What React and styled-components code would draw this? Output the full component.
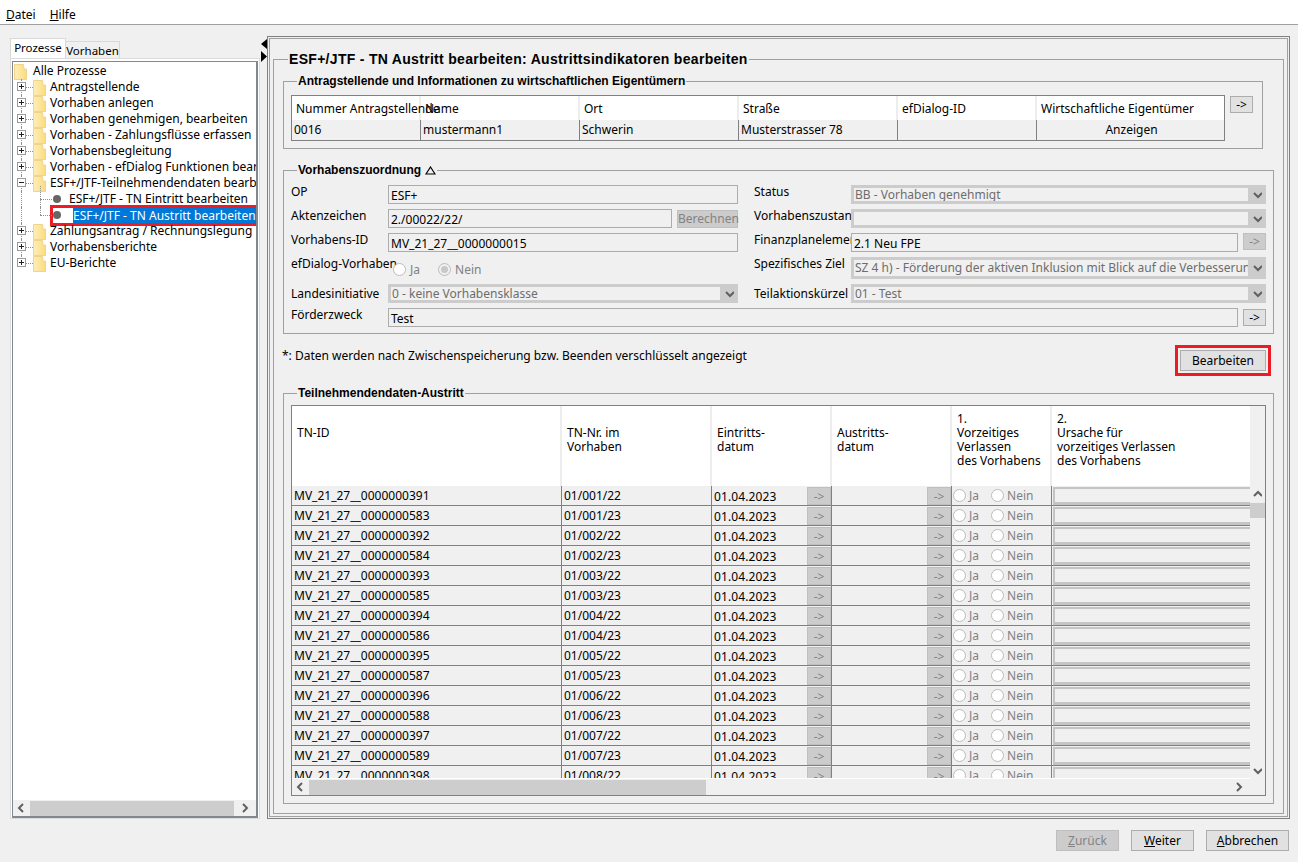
import React from 'react';
import styled, { createGlobalStyle } from 'styled-components';

const Global = createGlobalStyle`
  html, body { margin: 0; padding: 0; background: #f0f0f0; }
  body { font-family: "Noto Sans", "Liberation Sans", sans-serif; font-size: 12px; color: #000; }
  * { box-sizing: border-box; }
`;

const Page = styled.div`
  width: 1298px; height: 862px; display: flex; flex-direction: column; overflow: hidden; background: #f0f0f0;
`;
const MenuBar = styled.div`
  height: 25px; background: #fff; border-bottom: 1px solid #a0a0a0; display: flex; gap: 14px; padding: 6px 0 0 6px; line-height: 17px;
`;
const MenuItem = styled.span`
  font-size: 12px;
  u { text-underline-offset: 1px; }
`;
const Body = styled.div`
  display: flex; height: 794px; padding: 11px 0 0 10px;
`;
const LeftPane = styled.div`
  width: 250px; height: 783px; display: flex; flex-direction: column;
`;
const Tabs = styled.div`
  display: flex; align-items: flex-end; height: 22px; 
`;
const Tab = styled.div`
  height: ${p => p.$active ? 20 : 17}px;
  width: ${p => p.$active ? 56 : 54}px;
  background: ${p => p.$active ? '#fff' : '#f0f0f0'};
  border: 1px solid #d9d9d9;
  border-bottom: none;
  ${p => !p.$active && 'border-left: none;'}
  text-align: center; font-size: 11.5px; line-height: ${p => p.$active ? 17 : 17}px;
`;
const TabPanel = styled.div`
  height: 761px; background: #fff; border: 1px solid #dcdcdc; padding: 2px 1px 1px 1px;
`;
const TreeBox = styled.div`
  height: 757px; border: 2px solid #828790; border-width: 1px 2px 2px 1px; background: #fff; display: flex; flex-direction: column;
`;
const TreeList = styled.div`
  flex: 1; overflow: hidden; padding-top: 1px;
`;
const Row = styled.div`
  position: relative; height: 16px; display: flex; align-items: center; white-space: nowrap; padding-left: ${p => p.$pad}px; line-height: 16px;
`;
const RowLabel = styled.span`
  margin-left: ${p => p.$gap}px;
`;
const VLine = styled.i`
  position: absolute; left: ${p => p.$x}px; top: ${p => p.$top}px; height: ${p => p.$h}px; width: 0; border-left: 1px dotted #909090;
`;
const HLine = styled.i`
  position: absolute; left: ${p => p.$x}px; top: 8px; width: ${p => p.$w}px; height: 0; border-top: 1px dotted #909090;
`;
const Expander = styled.span`
  position: absolute; left: 4px; top: 3px; width: 9px; height: 9px; background: #fff; border: 1px solid #9a9a9a; display: flex; align-items: center; justify-content: center; z-index: 1;
`;
const Selected = styled.span`
  display: inline-flex; align-items: center; height: 15px; outline: 3px solid #ed1c24; padding-right: 0;
`;
const SelectedText = styled.span`
  background: #0078d7; color: #fff; height: 15px; line-height: 15px; margin-left: 12px; padding-right: 2px;
`;
const Bullet = styled.span`
  width: 8px; height: 8px; border-radius: 50%; background: #666; display: inline-block; flex: none;
`;

const HScroll = styled.div`
  height: 16px; background: #f0f0f0; display: flex; align-items: center; flex: none; padding: ${p => p.$pad};
`;
const ArrowBtn = styled.span`
  width: ${p => p.$w || 16}px; height: 15px; display: flex; align-items: center; justify-content: center; flex: none;
`;
const Thumb = styled.span`
  display: block; background: #cdcdcd; height: 15px; width: ${p => p.$w}px; flex: none;
`;
const Track = styled.span`
  flex: 1;
`;

const Splitter = styled.div`
  width: 8px; margin-left: -1px; padding: 3px 0 0 2px; display: flex; flex-direction: column; gap: 2px; flex: none; align-items: flex-start;
`;
const OuterPanel = styled.div`
  width: 1023px; height: 783px; border: 1px solid #808080; padding: 1px; 
`;
const InnerPanel = styled.div`
  height: 100%; border: 1px solid #a0a0a0; padding: 12px 3px 0 3px;
`;
const Fieldset = styled.fieldset`
  margin: ${p => p.$m || 0}; padding: ${p => p.$p}; border: 1px solid ${p => p.$c || '#a0a0a0'}; min-width: 0; ${p => p.$h && `height: ${p.$h}px;`}
`;
const Legend = styled.legend`
  padding: 0 1px; margin-left: ${p => p.$ml || 6}px; font-family: "Liberation Sans", Arial, sans-serif; font-weight: 700; line-height: ${p => p.$lh || 14}px; font-size: ${p => p.$fs || 12}px; letter-spacing: ${p => p.$ls || 0}px; display: flex; align-items: center; gap: 4px;
`;

const Table = styled.div`
  border: 1px solid #808080; background: #f0f0f0;
`;
const HeadRow = styled.div`
  display: grid; grid-template-columns: ${p => p.$cols}; background: #fff; height: ${p => p.$h}px;
`;
const BodyRow = styled.div`
  display: grid; grid-template-columns: ${p => p.$cols}; height: ${p => p.$h}px; border-bottom: ${p => p.$line ? '1px solid #808080' : 'none'};
`;
const HeadCell = styled.div`
  padding: ${p => p.$p || '0 0 0 5px'}; border-right: 2px solid #ededed; line-height: 14px; white-space: nowrap;
  &:last-child { border-right: none; }
`;
const Cell = styled.div`
  border-right: 1px solid #808080; white-space: nowrap; overflow: hidden; padding-left: 2px; line-height: 19px; color: #000; text-align: ${p => p.$center ? 'center' : 'left'};
`;

const SmallBtn = styled.button`
  width: 23px; height: 17px; padding: 0; border: 1px solid #adadad; background: #e1e1e1; font: inherit; font-size: 12px; line-height: 13px; color: #000; flex: none;
  ${p => p.$off && 'background: #cccccc; border-color: #bfbfbf; color: #838383;'}
`;
const Section1Row = styled.div`
  display: flex; gap: 5px; align-items: flex-start;
`;
const Grid = styled.div`
  display: grid; grid-template-columns: 97px 350px 16px 97px 415px; grid-template-rows: 24px 24px 24px 27px 24px 19px; 
`;
const Label = styled.div`
  padding-top: ${p => p.$t ?? 0}px; line-height: 14px; white-space: nowrap; 
`;
const Spacer = styled.div``;
const Ctl = styled.div`
  display: flex; gap: 5px; align-items: flex-start; min-width: 0; ${p => p.$span && `grid-column: span ${p.$span};`}
`;
const Input = styled.div`
  flex: 1; height: 19px; border: 1px solid #acacac; background: #f0f0f0; padding: 3px 1px 0 2px; line-height: 14px; white-space: nowrap; overflow: hidden;
`;
const CalcBtn = styled.button`
  width: 61px; height: 18px; margin-top: 1px; padding: 0; border: 1px solid #bfbfbf; background: #cccccc; color: #838383; font: inherit; font-size: 12px; line-height: 14px; flex: none;
`;
const Select = styled.div`
  flex: 1; height: ${p => p.$h || 19}px; border: 3px solid #cccccc; border-right: none; background: #f0f0f0; display: flex; min-width: 0;
`;
const SelectText = styled.div`
  flex: 1; padding-left: 1px; color: #6d6d6d; line-height: ${p => (p.$h || 19) - 6}px; white-space: nowrap; overflow: hidden;
`;
const SelectArrow = styled.div`
  width: 18px; background: #cccccc; display: flex; align-items: center; justify-content: center; flex: none;
`;
const RadioGroup = styled.div`
  display: flex; align-items: center; gap: 4px; height: 24px; padding: 0 0 0 5px; color: #808080; margin-top: 0;
`;
const Radio = styled.span`
  width: 13px; height: 13px; border-radius: 50%; border: 1px solid #bcbcbc; background: #fff; flex: none; display: flex; align-items: center; justify-content: center; margin-left: ${p => p.$ml || 0}px;
  ${p => p.$on && `background: #f0f0f0; &::after { content: ''; width: 7px; height: 7px; border-radius: 50%; background: #c8c8c8; }`}
`;
const NoteRow = styled.div`
  display: flex; justify-content: space-between; align-items: flex-start; height: 52px; padding: 13px 6px 0 0; margin-left: -1px; margin-right: 2px;
`;
const Note = styled.div`
  line-height: 16px; padding-top: 1px;
`;
const EditBtn = styled.button`
  width: 86px; height: 21px; margin-top: 3px; padding: 0; border: 1px solid #adadad; background: #e1e1e1; font: inherit; font-size: 12px; outline: 3px solid #ed1c24; outline-offset: 2px;
`;
const DataTable = styled.div`
  border: 1px solid #808080; height: 391px; display: flex; flex-direction: column; background: #f0f0f0;
`;
const TableMain = styled.div`
  flex: 1; display: flex; min-height: 0;
`;
const TableScroll = styled.div`
  width: 958px; flex: none; overflow: hidden; background: #fff; border-bottom: 1px solid #fff; height: 373px;
`;
const VScroll = styled.div`
  flex: 1; display: flex; flex-direction: column; padding-top: 80px;
`;
const VThumb = styled.span`
  display: block; height: 15px; background: #cdcdcd;
`;
const VArrow = styled.span`
  height: 17px; display: flex; align-items: center; justify-content: center;
`;
const VTrack = styled.span`
  flex: 1;
`;
const DataRows = styled.div`
  background: #f0f0f0;
`;
const DateCell = styled(Cell)`
  display: flex; justify-content: space-between; padding-top: 0; line-height: 21px; letter-spacing: 0.1px;
`;
const CellBtn = styled(SmallBtn)`
  margin-top: 1px; height: 18px; font-size: 12px; width: 24px;
`;
const RadioCell = styled(Cell)`
  display: flex; align-items: center; gap: 3px; color: #808080; padding-left: 1px; height: 19px;
`;
const FakeField = styled.div`
  margin: 1px 0 0 1px; height: 18px; border: solid #c4c4c4; border-width: 2px 0 3px 2px; background: #f0f0f0;
`;
const LastCell = styled.div`
  overflow: hidden;
`;

const Footer = styled.div`
  display: flex; justify-content: flex-end; gap: 12px; padding: 11px 9px 0 0;
`;
const FootBtn = styled.button`
  height: 21px; width: ${p => p.$w}px; padding: 0; border: 1px solid #adadad; background: #e1e1e1; font: inherit; font-size: 12px; color: #000;
  ${p => p.$off && 'background: #cccccc; border-color: #bfbfbf; color: #838383;'}
`;
const Tri = styled.svg`
  display: block; flex: none;
`;

const Chevron = ({ dir }) => {
  const pts = { left: '6,1 2,5 6,9', right: '2,1 6,5 2,9', up: '1,6 5,2 9,6', down: '1,3 5,7 9,3' }[dir];
  return <svg width="9" height="10" viewBox="0 0 9 10" style={{ display: 'block' }}><polyline points={pts} fill="none" stroke="#606060" strokeWidth="2" /></svg>;
};

const Folder = ({ ml }) => (
  <svg width="13" height="17" viewBox="0 0 13 17" style={{ display: 'block', flex: 'none', marginLeft: ml }}>
    <defs>
      <linearGradient id="fg" x1="0" x2="1" y1="0" y2="0">
        <stop offset="0" stopColor="#ffeeb8" />
        <stop offset="1" stopColor="#fbdb7e" />
      </linearGradient>
    </defs>
    <path d="M0.5 1.5 L9.5 1.5 L10 6 L12.5 6 L12.5 16.5 L0.5 16.5 Z" fill="url(#fg)" stroke="#efd58c" strokeWidth="1" />
  </svg>
);

const Plus = ({ minus }) => (
  <svg width="7" height="7" viewBox="0 0 7 7" style={{ display: 'block' }}>
    <rect x="1" y="3" width="5" height="1" fill="#222" />
    {!minus && <rect x="3" y="1" width="1" height="5" fill="#222" />}
  </svg>
);

const treeTop = ['Antragstellende', 'Vorhaben anlegen', 'Vorhaben genehmigen, bearbeiten', 'Vorhaben - Zahlungsflüsse erfassen', 'Vorhabensbegleitung', 'Vorhaben - efDialog Funktionen bearbeiten'];
const treeBottom = ['Zahlungsantrag / Rechnungslegung', 'Vorhabensberichte', 'EU-Berichte'];

const TreeFolder = ({ text, minus, last }) => (
  <Row $pad={20}>
    <VLine $x={8} $top={0} $h={last ? 8 : 16} />
    <HLine $x={13} $w={7} />
    <Expander><Plus minus={minus} /></Expander>
    <Folder />
    <RowLabel $gap={4}>{text}</RowLabel>
  </Row>
);

const Cols1 = '129px 159px 159px 159px 139px 188px';
const names = [391, 583, 392, 584, 393, 585, 394, 586, 395, 587, 396, 588, 397, 589, 398];
const rows = names.map((n, i) => ({
  id: `MV_21_27__0000000${n}`,
  nr: `01/${String(Math.floor(i / 2) + 1).padStart(3, '0')}/${i % 2 ? 23 : 22}`,
}));
const Cols2 = '270px 150px 120px 120px 100px 198px';

const heads = [
  ['\u00a0', 'TN-ID'],
  ['\u00a0', 'TN-Nr. im', 'Vorhaben'],
  ['\u00a0', 'Eintritts-', 'datum'],
  ['\u00a0', 'Austritts-', 'datum'],
  ['1.', 'Vorzeitiges', 'Verlassen', 'des Vorhabens'],
  ['2.', 'Ursache für', 'vorzeitiges Verlassen', 'des Vorhabens'],
];

export default function App() {
  return (
    <Page>
      <Global />
      <MenuBar>
        <MenuItem><u>D</u>atei</MenuItem>
        <MenuItem><u>H</u>ilfe</MenuItem>
      </MenuBar>
      <Body>
        <LeftPane>
          <Tabs>
            <Tab $active>Prozesse</Tab>
            <Tab>Vorhaben</Tab>
          </Tabs>
          <TabPanel>
            <TreeBox>
              <TreeList>
                <Row $pad={1}>
                  <Folder />
                  <RowLabel $gap={6}>Alle Prozesse</RowLabel>
                </Row>
                {treeTop.map(t => <TreeFolder key={t} text={t} />)}
                <TreeFolder text="ESF+/JTF-Teilnehmendendaten bearbeiten" minus />
                <Row $pad={40}>
                  <VLine $x={8} $top={0} $h={16} />
                  <VLine $x={27} $top={-5} $h={21} />
                  <HLine $x={27} $w={12} />
                  <Bullet />
                  <RowLabel $gap={8}>ESF+/JTF - TN Eintritt bearbeiten</RowLabel>
                </Row>
                <Row $pad={40}>
                  <VLine $x={8} $top={0} $h={16} />
                  <VLine $x={27} $top={0} $h={8} />
                  <HLine $x={27} $w={12} />
                  <Selected>
                    <Bullet />
                    <SelectedText>ESF+/JTF - TN Austritt bearbeiten</SelectedText>
                  </Selected>
                </Row>
                {treeBottom.map((t, i) => <TreeFolder key={t} text={t} last={i === 2} />)}
              </TreeList>
              <HScroll $pad="0 0 0 0">
                <ArrowBtn $w={17}><Chevron dir="left" /></ArrowBtn>
                <Thumb $w={204} />
                <Track />
                <ArrowBtn $w={22}><Chevron dir="right" /></ArrowBtn>
              </HScroll>
            </TreeBox>
          </TabPanel>
        </LeftPane>
        <Splitter>
          <Tri width="7" height="10" viewBox="0 0 7 10"><path d="M6 0 L0 5 L6 10 Z" fill="#000" /></Tri>
          <Tri width="7" height="11" viewBox="0 0 7 11"><path d="M0 0 L6 5.5 L0 11 Z" fill="#000" /></Tri>
        </Splitter>
        <OuterPanel>
          <InnerPanel>
            <Fieldset $p="7px 9px 0 9px" $h={763} $c="#a0a0a0">
              <Legend $fs={14} $lh={16} $ml={5} $ls={0.3}>ESF+/JTF - TN Austritt bearbeiten: Austrittsindikatoren bearbeiten</Legend>
              <Fieldset $p="7px 7px 7px 7px" $m="0 11px 0 0">
                <Legend>Antragstellende und Informationen zu wirtschaftlichen Eigentümern</Legend>
                <Section1Row>
                  <Table style={{ width: 934 }}>
                    <HeadRow $cols={Cols1} $h={24}>
                      {['Nummer Antragstellende', 'Name', 'Ort', 'Straße', 'efDialog-ID', 'Wirtschaftliche Eigentümer'].map(h => (
                        <HeadCell key={h} $p="6px 0 0 4px">{h}</HeadCell>
                      ))}
                    </HeadRow>
                    <BodyRow $cols={Cols1} $h={20}>
                      <Cell>0016</Cell>
                      <Cell>mustermann1</Cell>
                      <Cell>Schwerin</Cell>
                      <Cell>Musterstrasser 78</Cell>
                      <Cell />
                      <Cell $center>Anzeigen</Cell>
                    </BodyRow>
                  </Table>
                  <SmallBtn style={{ marginTop: 1 }}>-&gt;</SmallBtn>
                </Section1Row>
              </Fieldset>
              <Fieldset $p="8px 7px 6px 7px" $m="14px 0 0 0">
                <Legend>
                  Vorhabenszuordnung
                  <svg width="11" height="9" viewBox="0 0 11 9" style={{ display: 'block' }}><path d="M5.5 1 L10 8 L1 8 Z" fill="none" stroke="#000" strokeWidth="1.2" /></svg>
                </Legend>
                <Grid>
                  <Label $t={0}>OP</Label>
                  <Ctl><Input>ESF+</Input></Ctl>
                  <Spacer />
                  <Label>Status</Label>
                  <Ctl><Select><SelectText>BB - Vorhaben genehmigt</SelectText><SelectArrow><Chevron dir="down" /></SelectArrow></Select></Ctl>

                  <Label>Aktenzeichen</Label>
                  <Ctl><Input>2./00022/22/</Input><CalcBtn>Berechnen</CalcBtn></Ctl>
                  <Spacer />
                  <Label>Vorhabenszustand</Label>
                  <Ctl><Select><SelectText /><SelectArrow><Chevron dir="down" /></SelectArrow></Select></Ctl>

                  <Label>Vorhabens-ID</Label>
                  <Ctl><Input>MV_21_27__0000000015</Input></Ctl>
                  <Spacer />
                  <Label>Finanzplanelement</Label>
                  <Ctl><Input>2.1 Neu FPE</Input><SmallBtn $off>-&gt;</SmallBtn></Ctl>

                  <Label>efDialog-Vorhaben</Label>
                  <RadioGroup>
                    <Radio /><span>Ja</span>
                    <Radio $on $ml={14} /><span>Nein</span>
                  </RadioGroup>
                  <Spacer />
                  <Label>Spezifisches Ziel</Label>
                  <Ctl><Select $h={22}><SelectText $h={22}>SZ 4 h) - Förderung der aktiven Inklusion mit Blick auf die Verbesserung der Ch...</SelectText><SelectArrow><Chevron dir="down" /></SelectArrow></Select></Ctl>

                  <Label $t={3}>Landesinitiative</Label>
                  <Ctl><Select><SelectText>0 - keine Vorhabensklasse</SelectText><SelectArrow><Chevron dir="down" /></SelectArrow></Select></Ctl>
                  <Spacer />
                  <Label $t={3}>Teilaktionskürzel</Label>
                  <Ctl><Select><SelectText>01 - Test</SelectText><SelectArrow><Chevron dir="down" /></SelectArrow></Select></Ctl>

                  <Label $t={0}>Förderzweck</Label>
                  <Ctl $span={4}><Input>Test</Input><SmallBtn style={{ marginTop: 1 }}>-&gt;</SmallBtn></Ctl>
                </Grid>
              </Fieldset>
              <NoteRow>
                <Note>*: Daten werden nach Zwischenspeicherung bzw. Beenden verschlüsselt angezeigt</Note>
                <EditBtn>Bearbeiten</EditBtn>
              </NoteRow>
              <Fieldset $p="5px 7px 7px 7px">
                <Legend>Teilnehmendendaten-Austritt</Legend>
                <DataTable>
                  <TableMain>
                    <TableScroll>
                      <HeadRow $cols={Cols2} $h={80}>
                        {heads.map((lines, i) => (
                          <HeadCell key={i} $p="6px 0 0 5px">
                            {lines.map((l, j) => <div key={j}>{l}</div>)}
                          </HeadCell>
                        ))}
                      </HeadRow>
                      <DataRows>
                        {rows.map(r => (
                          <BodyRow key={r.id} $cols={Cols2} $h={20} $line>
                            <Cell>{r.id}</Cell>
                            <Cell>{r.nr}</Cell>
                            <DateCell>01.04.2023<CellBtn $off>-&gt;</CellBtn></DateCell>
                            <DateCell><span /><CellBtn $off>-&gt;</CellBtn></DateCell>
                            <RadioCell>
                              <Radio /><span>Ja</span>
                              <Radio $ml={9} /><span>Nein</span>
                            </RadioCell>
                            <LastCell><FakeField /></LastCell>
                          </BodyRow>
                        ))}
                      </DataRows>
                    </TableScroll>
                    <VScroll>
                      <VArrow><Chevron dir="up" /></VArrow>
                      <VThumb />
                      <VTrack />
                      <VArrow><Chevron dir="down" /></VArrow>
                    </VScroll>
                  </TableMain>
                  <HScroll $pad="0 17px 0 0">
                    <ArrowBtn $w={17}><Chevron dir="left" /></ArrowBtn>
                    <Thumb $w={397} />
                    <Track />
                    <ArrowBtn $w={17}><Chevron dir="right" /></ArrowBtn>
                  </HScroll>
                </DataTable>
              </Fieldset>
            </Fieldset>
          </InnerPanel>
        </OuterPanel>
      </Body>
      <Footer>
        <FootBtn $off $w={63}><u>Z</u>urück</FootBtn>
        <FootBtn $w={63}><u>W</u>eiter</FootBtn>
        <FootBtn $w={83}><u>A</u>bbrechen</FootBtn>
      </Footer>
    </Page>
  );
}
